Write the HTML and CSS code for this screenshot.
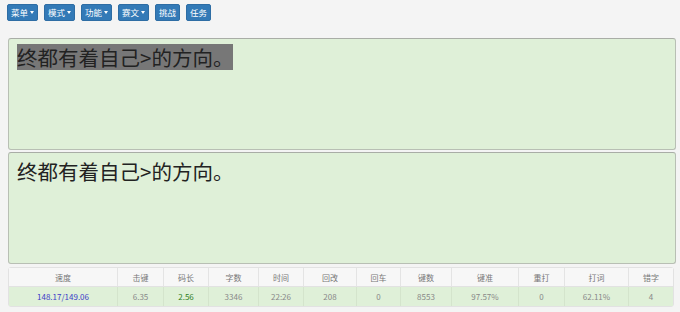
FILE: index.html
```html
<!DOCTYPE html>
<html lang="zh">

<head>
    <meta charset="UTF-8">
    <meta name="viewport" content="width=device-width, initial-scale=1.0">
    <title>跟打</title>
    <link rel="stylesheet" href="styles.css">
</head>

<body>
    <div class="toolbar">
        <button class="btn">菜单<span class="caret"></span></button>
        <button class="btn">模式<span class="caret"></span></button>
        <button class="btn">功能<span class="caret"></span></button>
        <button class="btn">赛文<span class="caret"></span></button>
        <button class="btn">挑战</button>
        <button class="btn">任务</button>
    </div>

    <div class="text-box">
        <span class="typed">终都有着自己&gt;的方向。</span>
    </div>
    <div class="text-box">终都有着自己&gt;的方向。</div>

    <table class="stats">
        <colgroup>
            <col style="width:108px">
            <col style="width:46px">
            <col style="width:45px">
            <col style="width:50px">
            <col style="width:45px">
            <col style="width:53px">
            <col style="width:44px">
            <col style="width:51px">
            <col style="width:67px">
            <col style="width:46px">
            <col style="width:64px">
            <col style="width:45px">
        </colgroup>
        <tr class="head">
            <td>速度</td>
            <td>击键</td>
            <td>码长</td>
            <td>字数</td>
            <td>时间</td>
            <td>回改</td>
            <td>回车</td>
            <td>键数</td>
            <td>键准</td>
            <td>重打</td>
            <td>打词</td>
            <td>错字</td>
        </tr>
        <tr class="result">
            <td class="speed">148.17/149.06</td>
            <td>6.35</td>
            <td class="code-len">2.56</td>
            <td>3346</td>
            <td>22:26</td>
            <td>208</td>
            <td>0</td>
            <td>8553</td>
            <td>97.57%</td>
            <td>0</td>
            <td>62.11%</td>
            <td>4</td>
        </tr>
    </table>
</body>

</html>
```

FILE: styles.css
```css
body {
    margin: 0;
    padding: 0;
    font-family: 'Noto Sans CJK SC', 'Noto Sans', sans-serif;
    background-color: #f4f4f4;
    width: 680px;
    height: 312px;
    overflow: hidden;
}

.toolbar {
    display: flex;
    gap: 6px;
    padding: 4px 0 0 7px;
    height: 17px;
    margin-bottom: 17px;
}

.btn {
    background-color: #337ab7;
    color: #fff;
    border: 1px solid #2e6da4;
    border-radius: 2px;
    padding: 0 3px;
    height: 17px;
    font-family: inherit;
    font-size: 8.5px;
    line-height: 15px;
    display: flex;
    align-items: center;
}

.caret {
    display: inline-block;
    width: 0;
    height: 0;
    margin-left: 2px;
    border-top: 3px solid #fff;
    border-left: 2px solid transparent;
    border-right: 2px solid transparent;
}

.text-box {
    margin: 0 4px 2px 8px;
    height: 112px;
    box-sizing: border-box;
    background-color: #dff0d8;
    border: 1px solid #b8bfb4;
    border-top-color: #a9ada6;
    border-radius: 3px;
    padding: 5px 8px;
    font-size: 20.5px;
    line-height: 26px;
    color: #222;
}

.typed {
    display: inline-block;
    background-color: #777;
    line-height: 26px;
}

.stats {
    margin: 3px 0 0 8px;
    width: 664px;
    table-layout: fixed;
    border-collapse: separate;
    border-spacing: 0;
    border: 1px solid #e2e2e2;
    border-radius: 3px;
    font-size: 8px;
    text-align: center;
    color: #888;
}

.stats td {
    border-left: 1px solid #e4e4e4;
    padding: 0;
}

.stats td:first-child {
    border-left: none;
}

.head td {
    height: 18px;
    background-color: #f7f7f7;
    color: #777;
    border-bottom: 1px solid #e2e2e2;
}

.result td {
    height: 19px;
    background-color: #dff0d8;
    border-left-color: #d4e4cc;
}

.result .speed {
    color: #3c3cc8;
}

.result .code-len {
    color: #2f7d1e;
}
```
